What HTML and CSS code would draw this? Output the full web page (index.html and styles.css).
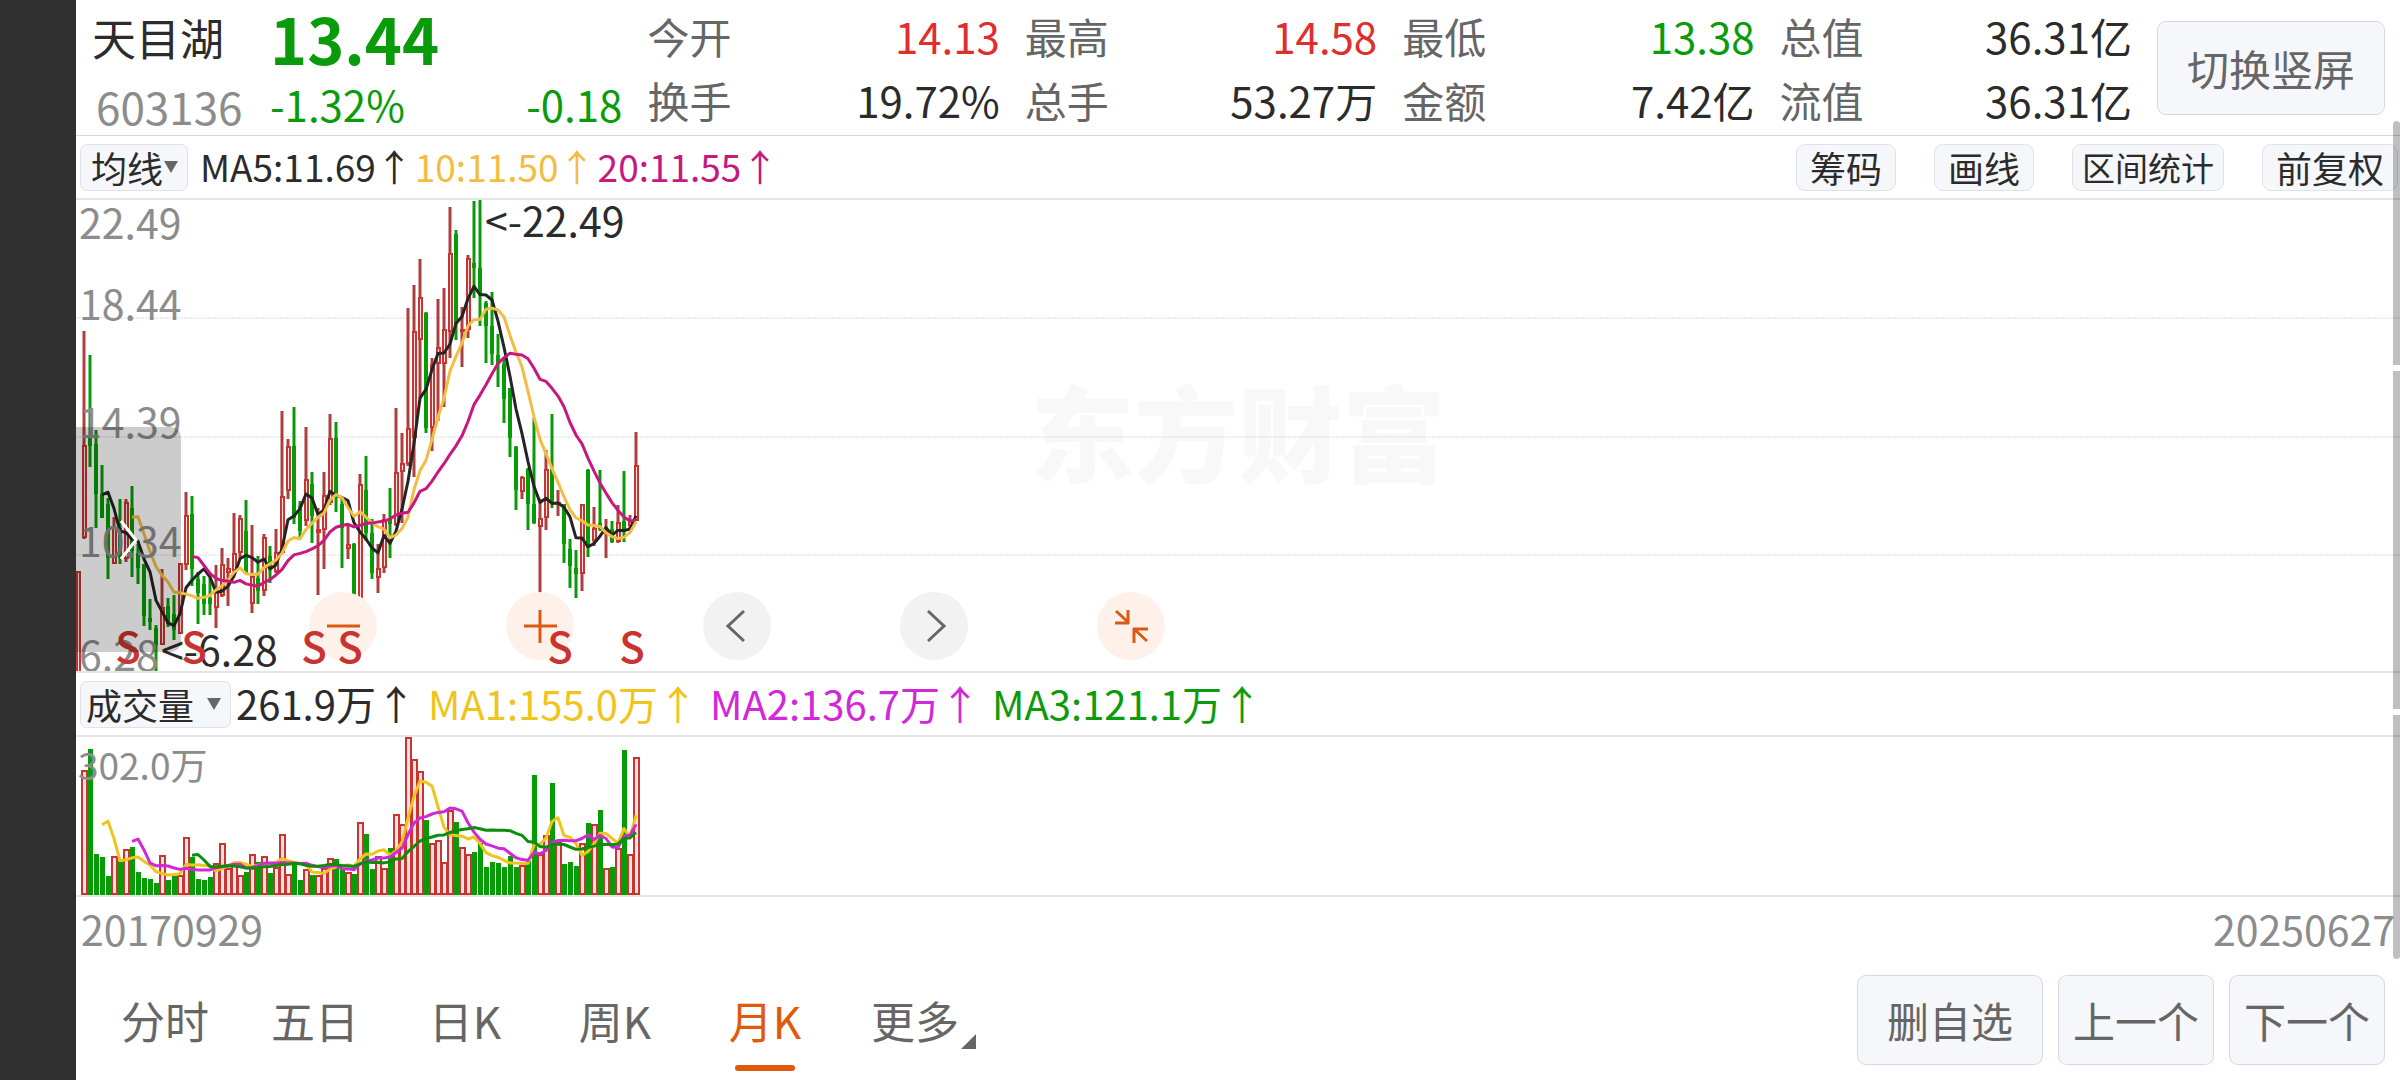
FILE: index.html
```html
<!DOCTYPE html>
<html lang="zh-CN">
<head>
  <meta charset="UTF-8">
  <meta name="viewport" content="width=device-width, initial-scale=1.0">
  <title>天目湖 603136</title>
  <link rel="stylesheet" href="styles.css">
</head>
<body>
  <main class="page">
    <header class="quote">
      <div class="stock">
        <h1>天目湖</h1>
        <span class="code">603136</span>
      </div>
      <div class="price down">
        <strong>13.44</strong>
        <div class="change"><span>-1.32%</span><span>-0.18</span></div>
      </div>
      <dl class="stats">
        <div><dt>今开</dt><dd class="up">14.13</dd></div>
        <div><dt>换手</dt><dd>19.72%</dd></div>
      </dl>
      <dl class="stats">
        <div><dt>最高</dt><dd class="up">14.58</dd></div>
        <div><dt>总手</dt><dd>53.27万</dd></div>
      </dl>
      <dl class="stats">
        <div><dt>最低</dt><dd class="down">13.38</dd></div>
        <div><dt>金额</dt><dd>7.42亿</dd></div>
      </dl>
      <dl class="stats">
        <div><dt>总值</dt><dd>36.31亿</dd></div>
        <div><dt>流值</dt><dd>36.31亿</dd></div>
      </dl>
      <button class="btn rotate" type="button">切换竖屏</button>
    </header>

    <section class="toolbar">
      <span class="picker">
        <select aria-label="主图指标"><option>均线</option></select>
      </span>
      <p class="legend">
        <span>MA5:11.69↑</span>
        <span class="ma10">10:11.50↑</span>
        <span class="ma20">20:11.55↑</span>
      </p>
      <div class="tools">
        <button class="btn small" type="button">筹码</button>
        <button class="btn small" type="button">画线</button>
        <button class="btn small narrow" type="button">区间统计</button>
        <button class="btn small" type="button">前复权</button>
      </div>
    </section>

    <section class="chart">
      <div class="watermark">东方财富</div>
      <svg class="kline" id="kline" role="img" aria-label="月K线">
        <g class="grid">
          <line x1="0" y1="118" x2="100%" y2="118"/>
          <line x1="0" y1="237" x2="100%" y2="237"/>
          <line x1="0" y1="355" x2="100%" y2="355"/>
        </g>
        <g id="candles"></g>
        <g class="axis">
          <text x="3" y="39">22.49</text>
          <text x="3" y="120">18.44</text>
          <text x="3" y="238">14.39</text>
          <text x="3" y="357">10.34</text>
          <text x="3" y="471">6.28</text>
        </g>
      </svg>
      <div class="controls">
        <button class="round orange" type="button" aria-label="缩小">
          <svg viewBox="0 0 68 68"><path d="M18 34h33"/></svg>
        </button>
        <button class="round orange" type="button" aria-label="放大">
          <svg viewBox="0 0 68 68"><path d="M18 34h33M34 18v33"/></svg>
        </button>
        <button class="round" type="button" aria-label="左移">
          <svg viewBox="0 0 68 68"><path d="M41 19L25 34l16 15"/></svg>
        </button>
        <button class="round" type="button" aria-label="右移">
          <svg viewBox="0 0 68 68"><path d="M28 19l16 15-16 15"/></svg>
        </button>
        <button class="round orange" type="button" aria-label="收起">
          <svg viewBox="0 0 68 68"><path d="M19 19l13 12M18 31h14M31 18v14M50 49L37 37M36 37h15M37 36v15"/></svg>
        </button>
      </div>
      <svg class="marks" aria-hidden="true">
        <g class="peak">
          <text x="409" y="37">&lt;-22.49</text>
          <text x="85" y="466">&lt;-6.28</text>
        </g>
        <g class="sell">
          <text x="52" y="463">S</text>
          <text x="118" y="463">S</text>
          <text x="238" y="463">S</text>
          <text x="274" y="463">S</text>
          <text x="484" y="463">S</text>
          <text x="556" y="463">S</text>
        </g>
      </svg>
      <button class="drawer" type="button" aria-label="展开">
        <svg viewBox="0 0 20 40"><path d="M2 1l15 19L2 39"/></svg>
      </button>
    </section>

    <section class="toolbar volbar">
      <span class="picker wide">
        <select aria-label="副图指标"><option>成交量</option></select>
      </span>
      <p class="legend">
        <span>261.9万↑</span>
        <span class="v1">MA1:155.0万↑</span>
        <span class="v2">MA2:136.7万↑</span>
        <span class="v3">MA3:121.1万↑</span>
      </p>
    </section>

    <section class="volume">
      <svg id="volume" role="img" aria-label="成交量">
        <g id="bars"></g>
        <text class="volmax" x="2" y="43">302.0万</text>
      </svg>
    </section>

    <div class="dates"><time>20170929</time><time>20250627</time></div>

    <footer class="bottom">
      <nav class="tabs">
        <button type="button">分时</button>
        <button type="button">五日</button>
        <button type="button">日K</button>
        <button type="button">周K</button>
        <button type="button" class="active">月K</button>
        <button type="button" class="more">更多</button>
      </nav>
      <div class="actions">
        <button class="btn" type="button">删自选</button>
        <button class="btn tight" type="button">上一个</button>
        <button class="btn tight" type="button">下一个</button>
      </div>
    </footer>
  </main>
  <div class="scroll"><i></i><i class="long"></i><i></i></div>

  <script src="chart.js"></script>
</body>
</html>
```

FILE: styles.css
```css
* {
    margin: 0;
    padding: 0;
    box-sizing: border-box;
}

body {
    font-family: "Noto Sans CJK SC", "Noto Sans", sans-serif;
    font-size: 42px;
    color: #2b2b2b;
    background-color: #fff;
    border-left: 76px solid #303030;
    min-height: 100vh;
    overflow: hidden;
}

button, select {
    font: inherit;
    color: inherit;
    border: none;
    background: none;
    cursor: pointer;
}

.page {
    display: flex;
    flex-direction: column;
    min-height: 100vh;
}

.up {
    color: #e02d2d;
}

.down {
    color: #0a9b0a;
}

.btn {
    background-color: #f6f7fa;
    border: 1px solid #d5d8dc;
    border-radius: 9px;
    color: #666;
    white-space: nowrap;
}

/* header */
.quote {
    display: grid;
    grid-template-columns: 153px repeat(5, 1fr) 228px;
    column-gap: 25px;
    height: 136px;
    padding: 4px 15px 0 16px;
    border-bottom: 1px solid #d6d6d6;
}

.stock h1 {
    font-size: 44px;
    font-weight: 400;
    line-height: 66px;
}

.stock .code {
    display: block;
    padding-left: 4px;
    font-size: 44px;
    line-height: 72px;
    color: #8c8c8c;
}

.price strong {
    display: block;
    font-size: 63px;
    line-height: 68px;
}

.change {
    display: flex;
    justify-content: space-between;
    line-height: 64px;
}

.stats {
    line-height: 64px;
}

.stats div {
    display: flex;
    justify-content: space-between;
}

.stats dt {
    color: #666;
}

.rotate {
    height: 94px;
    margin-top: 17px;
    line-height: 60px;
}

/* indicator rows */
.toolbar {
    display: flex;
    align-items: center;
    height: 62px;
    padding-left: 4px;
    font-size: 37px;
}

.picker {
    display: flex;
    align-items: center;
    width: 108px;
    height: 47px;
    padding: 0 9px 0 10px;
    background-color: #f6f7fa;
    border: 1px solid #dfe2e6;
    border-radius: 7px;
}

.picker select {
    flex: 1;
    appearance: none;
    font-size: 36px;
    line-height: 44px;
    min-width: 0;
}

.picker::after {
    content: "";
    border: 7px solid transparent;
    border-top: 12px solid #666;
    border-bottom: none;
}

.picker.wide {
    width: 151px;
    padding-left: 5px;
}

.legend {
    display: flex;
    gap: 2px;
    padding-left: 12px;
    padding-bottom: 2px;
}

.ma10 {
    color: #f3bd45;
}

.ma20 {
    color: #c7187f;
}

.tools {
    display: flex;
    gap: 38px;
    margin-left: auto;
    padding-right: 2px;
}

.small {
    height: 47px;
    padding: 0 13px;
    font-size: 36px;
    line-height: 42px;
    border-color: #dfe2e6;
    color: #2b2b2b;
}

.narrow {
    padding: 0 9px;
    font-size: 33px;
}

/* k line */
.chart {
    position: relative;
    height: 475px;
    border-top: 2px solid #e5e5e5;
    border-bottom: 2px solid #e5e5e5;
}

.watermark {
    position: absolute;
    inset: 0;
    display: flex;
    align-items: center;
    justify-content: center;
    padding-bottom: 12px;
    font-size: 104px;
    font-weight: 900;
    color: #f8f8f8;
}

.kline, .marks {
    position: absolute;
    top: 0;
    left: 0;
    width: 100%;
    height: 100%;
}

.marks {
    pointer-events: none;
}

.grid line {
    stroke: #d9d9d9;
    stroke-width: 1;
    stroke-dasharray: 2 1;
}

.axis text, .peak text {
    font-size: 41px;
    fill: #8c8c8c;
}

.peak text {
    fill: #2b2b2b;
}

.sell text {
    font-size: 42px;
    font-weight: 500;
    text-anchor: middle;
    fill: #c93430;
}

.wick-up {
    stroke: #ad3f3f;
    stroke-width: 3;
}

.wick-down {
    stroke: #0a990a;
    stroke-width: 3;
}

.body-up {
    fill: #f8e4e4;
    stroke: #c93430;
    stroke-width: 2;
}

.body-down {
    fill: #069c06;
}

.line {
    fill: none;
    stroke: #242424;
    stroke-width: 3;
    stroke-linejoin: round;
}

.line.ma10 { stroke: #f3bd45; }
.line.ma20 { stroke: #c7187f; }
.line.v1 { stroke: #f0c41c; }
.line.v2 { stroke: #d128d8; }
.line.v3 { stroke: #0d8c0d; }

.controls {
    position: absolute;
    left: 233px;
    bottom: 11px;
    display: flex;
    gap: 129px;
}

.round {
    width: 68px;
    height: 68px;
    border-radius: 50%;
    background-color: #f2f2f2;
}

.round svg {
    display: block;
    fill: none;
    stroke: #666;
    stroke-width: 3;
}

.round.orange {
    background-color: #fef1ea;
}

.round.orange svg {
    stroke: #d95a12;
}

.drawer {
    position: absolute;
    left: 0;
    top: 227px;
    width: 105px;
    height: 225px;
    border-radius: 0 10px 10px 0;
    background-color: rgba(0, 0, 0, 0.2);
}

.drawer svg {
    display: block;
    width: 20px;
    margin: 0 auto;
    fill: none;
    stroke: #fff;
    stroke-width: 3;
}

/* volume */
.volbar {
    font-size: 40px;
}

.volbar .legend {
    gap: 12px;
    padding-left: 5px;
}

.v1 {
    color: #f0c41c;
}

.v2 {
    color: #d128d8;
}

.v3 {
    color: #0d9b0d;
}

.volume {
    border-top: 2px solid #e5e5e5;
    border-bottom: 2px solid #e5e5e5;
}

.volume svg {
    display: block;
    width: 100%;
    height: 158px;
}

.volmax {
    font-size: 37px;
    fill: #8c8c8c;
}

.dates {
    display: flex;
    justify-content: space-between;
    padding: 0 5px;
    font-size: 41px;
    line-height: 62px;
    color: #8c8c8c;
}

/* bottom */
.bottom {
    flex: 1;
    display: flex;
    align-items: center;
    justify-content: space-between;
    padding: 0 15px 0 14px;
}

.tabs {
    display: flex;
    align-self: stretch;
}

.tabs button {
    position: relative;
    width: 150px;
    font-size: 44px;
    color: #666;
}

.tabs .active {
    color: #e05a0c;
}

.tabs .active::after {
    content: "";
    position: absolute;
    left: 45px;
    bottom: 9px;
    width: 60px;
    height: 6px;
    border-radius: 3px;
    background-color: #e05a0c;
}

.tabs .more::after {
    content: "";
    position: absolute;
    right: 14px;
    bottom: 31px;
    border-left: 15px solid transparent;
    border-bottom: 15px solid #666;
}

.actions {
    display: flex;
    gap: 15px;
}

.actions .btn {
    height: 90px;
    padding: 0 29px;
}

.actions .tight {
    padding: 0 14px;
}

.scroll {
    position: absolute;
    top: 121px;
    right: 0;
    display: flex;
    flex-direction: column;
    gap: 6px;
}

.scroll i {
    width: 7px;
    height: 244px;
    background-color: rgba(0, 0, 0, 0.25);
}

.scroll .long {
    height: 338px;
}

.scroll i:first-child {
    border-radius: 4px 4px 0 0;
}

.scroll i:last-child {
    border-radius: 0 0 4px 4px;
}
```

FILE: chart.js
```js
// [direction, high, body top, body bottom, low] measured down from the top of the chart
const candles = [
  [1,371,371,473,473],[1,131,245,338,339],[0,155,238,246,267],[0,230,244,294,328],[0,265,294,318,318],
  [0,298,304,358,379],[1,317,327,364,364],[0,299,328,358,364],[1,299,302,359,362],[0,286,308,351,377],
  [0,344,353,368,384],[0,364,364,416,426],[0,399,418,422,430],[0,425,428,445,473],[1,369,407,445,445],
  [0,398,406,424,427],[0,395,414,430,440],[1,363,363,434,434],[1,292,315,365,370],[0,296,314,369,386],
  [0,372,379,393,424],[0,376,384,404,415],[0,378,398,404,415],[1,365,391,408,428],[1,348,364,396,397],
  [1,358,368,373,406],[1,313,353,371,374],[1,315,318,353,358],[0,300,331,373,374],[1,325,376,404,413],
  [0,356,378,391,404],[1,334,337,391,396],[0,346,356,368,383],[1,329,352,372,373],[1,211,296,353,354],
  [1,239,246,291,299],[0,207,246,318,324],[0,301,306,331,339],[1,227,279,321,326],[0,272,284,316,343],
  [1,308,329,333,395],[1,272,295,330,369],[1,214,238,303,305],[0,222,238,298,312],[0,298,304,328,368],
  [1,324,344,349,359],[0,343,344,406,410],[1,274,284,408,415],[0,256,290,333,341],[0,319,333,373,379],
  [1,344,368,378,393],[1,314,319,368,373],[0,288,319,324,358],[1,208,272,325,326],[1,233,263,272,323],
  [1,108,228,264,266],[1,85,131,238,277],[1,59,97,140,198],[0,112,113,228,233],[1,158,164,228,251],
  [1,99,147,164,221],[1,88,129,164,207],[1,7,53,132,158],[0,30,34,124,140],[1,107,129,132,167],
  [1,55,58,130,138],[0,1,63,68,98],[0,0,68,94,126],[0,101,103,126,163],[0,92,126,154,165],
  [0,134,155,164,187],[0,158,164,199,223],[0,188,188,238,257],[0,246,247,290,310],[1,276,277,292,299],
  [0,268,269,304,330],[0,218,304,323,324],[1,299,318,327,393],[1,250,269,318,330],[0,214,269,303,308],
  [1,290,302,304,316],[0,304,304,344,363],[0,339,349,366,388],[0,350,368,374,398],[1,304,304,374,391],
  [0,269,270,346,357],[1,307,328,341,346],[0,270,323,329,331],[1,319,331,333,358],[0,321,329,342,343],
  [1,305,322,342,343],[0,271,321,329,342],[1,315,321,326,328],[1,232,265,321,321]
];

const volumes = [
  1,125,146,41,38,19,39,34,46,48,23,17,16,12,40,15,19,20,58,38,16,15,18,32,52,27,32,20,23,41,33,
  39,22,28,61,21,32,15,26,20,20,27,37,36,27,23,21,73,61,26,39,27,47,81,71,158,136,124,75,52,55,33,
  85,73,48,41,43,52,28,33,32,28,39,28,30,34,120,41,60,112,53,31,33,29,52,72,71,85,27,28,47,145,41,138
];

const step = 6;
const volumeHeight = 158;

function add(parent, tag, attrs) {
  const el = document.createElementNS('http://www.w3.org/2000/svg', tag);
  for (const key in attrs) el.setAttribute(key, attrs[key]);
  parent.appendChild(el);
}

function average(parent, values, days, className) {
  const points = [];
  for (let i = days - 1; i < values.length; i++) {
    const part = values.slice(i - days + 1, i + 1);
    const mean = part.reduce((a, b) => a + b, 0) / days;
    points.push((2 + i * step) + ',' + mean.toFixed(1));
  }
  add(parent, 'polyline', { points: points.join(' '), class: 'line ' + className });
}

const candleGroup = document.getElementById('candles');
candles.forEach(([up, high, top, bottom, low], i) => {
  const x = 2 + i * step;
  const dir = up ? 'up' : 'down';
  add(candleGroup, 'line', { x1: x, y1: high, x2: x, y2: low, class: 'wick-' + dir });
  if (up) {
    add(candleGroup, 'rect', { x: x - 1, y: top + 1, width: 3, height: Math.max(bottom - top - 2, 1), class: 'body-up' });
  } else {
    add(candleGroup, 'rect', { x: x - 2, y: top, width: 4, height: bottom - top, class: 'body-down' });
  }
});

const closes = candles.map(c => c[0] ? c[2] : c[3]);
average(candleGroup, closes, 5, '');
average(candleGroup, closes, 10, 'ma10');
average(candleGroup, closes, 20, 'ma20');

const barGroup = document.getElementById('bars');
volumes.forEach((v, i) => {
  const x = 2 + i * step;
  const y = volumeHeight - v;
  if (candles[i][0]) {
    add(barGroup, 'rect', { x: x - 2, y: y + 1, width: 5, height: Math.max(v - 2, 0), class: 'body-up' });
  } else {
    add(barGroup, 'rect', { x: x - 2, y: y, width: 5, height: v, class: 'body-down' });
  }
});

const levels = volumes.map(v => volumeHeight - v);
average(barGroup, levels, 5, 'v1');
average(barGroup, levels, 10, 'v2');
average(barGroup, levels, 20, 'v3');
```
